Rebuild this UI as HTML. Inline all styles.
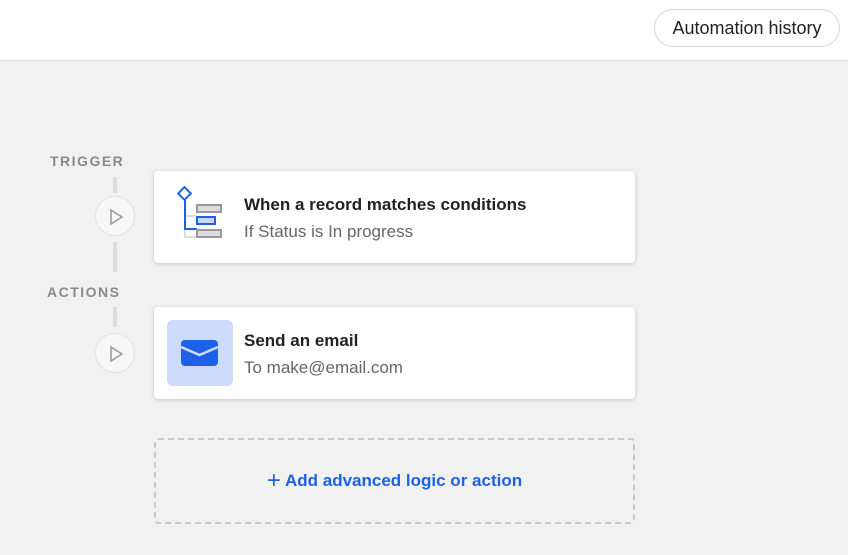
<!DOCTYPE html>
<html><head><style>
body{margin:0;width:848px;height:555px;background:#f1f1f1;font-family:"Liberation Sans",sans-serif;position:relative;overflow:hidden}
.top{position:absolute;left:0;top:0;width:848px;height:60px;background:#fff;border-bottom:1px solid #e0e0e0}
.btn{position:absolute;left:654px;top:9px;width:186px;height:38px;border:1px solid #d6d6d6;border-radius:20px;box-sizing:border-box;font-size:18px;color:#222;text-align:center;line-height:37px;background:#fff}
.lbl{position:absolute;font-size:14px;letter-spacing:1.5px;color:#8a8a8a;font-weight:bold}
.line{position:absolute;left:113px;width:4px;background:#ddd}
.circ{position:absolute;left:95px;width:40px;height:40px;border-radius:50%;background:#f7f7f7;border:1px solid #e2e2e2;box-sizing:border-box}
.circ svg{position:absolute;left:12px;top:11px}
.card{position:absolute;left:154px;width:481px;height:92px;background:#fff;border-radius:4px;box-shadow:0 1px 4px rgba(0,0,0,.18)}
.t{position:absolute;left:90px;top:24px;font-size:17px;font-weight:bold;color:#222}
.s{position:absolute;left:90px;top:51px;font-size:17px;color:#666}
.add{position:absolute;left:154px;top:438px;width:481px;height:86px;border:2px dashed #c9c9c9;box-sizing:border-box;border-radius:4px;text-align:center;line-height:82px;color:#1d62e6;font-size:17px;font-weight:bold}
</style></head><body>
<div class="top"><div class="btn">Automation history</div></div>
<div class="lbl" style="left:50px;top:153px">TRIGGER</div>
<div class="lbl" style="left:47px;top:284px">ACTIONS</div>
<div class="line" style="top:177px;height:16px"></div>
<div class="line" style="top:242px;height:30px"></div>
<div class="line" style="top:307px;height:20px"></div>
<div class="circ" style="top:196px"><svg width="16" height="18"><path d="M3 2 L14 9 L3 16 Z" fill="none" stroke="#999" stroke-width="1.5"/></svg></div>
<div class="circ" style="top:333px"><svg width="16" height="18"><path d="M3 2 L14 9 L3 16 Z" fill="none" stroke="#999" stroke-width="1.5"/></svg></div>
<div class="card" style="top:171px">
<svg style="position:absolute;left:20px;top:15px" width="50" height="56" viewBox="0 0 50 56">
<path d="M11 14 V51 H23 M11 30 H23" stroke="#ddd" stroke-width="2" fill="none"/>
<path d="M11 14 V43 H23" stroke="#1d62e6" stroke-width="2" fill="none"/>
<rect x="6" y="3" width="9" height="9" transform="rotate(45 10.5 7.5)" fill="#fff" stroke="#1d62e6" stroke-width="2"/>
<rect x="23" y="19" width="24" height="7" fill="#ddd" stroke="#999" stroke-width="2"/>
<rect x="23" y="31" width="18" height="7" fill="#c8d8f8" stroke="#1d62e6" stroke-width="2"/>
<rect x="23" y="44" width="24" height="7" fill="#ddd" stroke="#999" stroke-width="2"/>
</svg>
<div class="t">When a record matches conditions</div><div class="s">If Status is In progress</div></div>
<div class="card" style="top:307px">
<div style="position:absolute;left:13px;top:13px;width:66px;height:66px;background:#cddcfd;border-radius:6px">
<svg style="position:absolute;left:14px;top:20px" width="38" height="26" viewBox="0 0 38 26"><rect x="0" y="0" width="37" height="26" rx="4" fill="#1d62e6"/><path d="M0 7 L18.5 15 L37 7" stroke="#cddcfd" stroke-width="2.5" fill="none"/></svg></div>
<div class="t">Send an email</div><div class="s">To make@email.com</div></div>
<div class="add"><span style="font-weight:normal;font-size:24px;vertical-align:-2px">+</span> Add advanced logic or action</div>
</body></html>
